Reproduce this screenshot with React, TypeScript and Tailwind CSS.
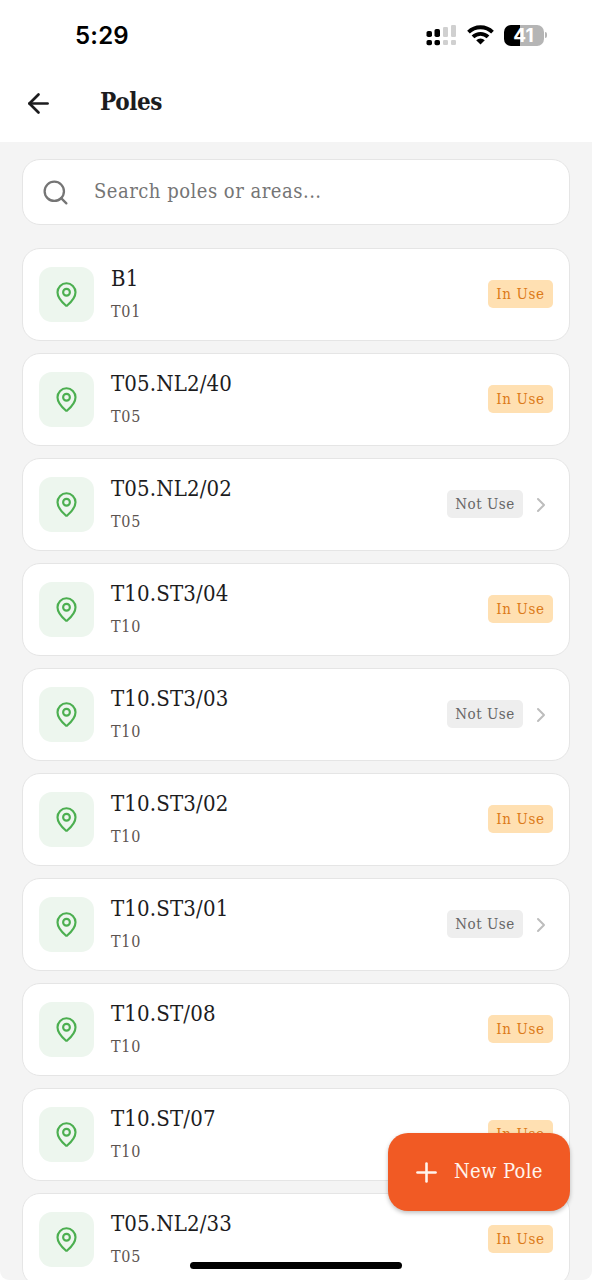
import { ArrowLeft, ChevronRight, MapPin, Plus, Search } from 'lucide-react'

type Pole = {
  name: string
  area: string
  inUse: boolean
}

const poles: Pole[] = [
  { name: 'B1', area: 'T01', inUse: true },
  { name: 'T05.NL2/40', area: 'T05', inUse: true },
  { name: 'T05.NL2/02', area: 'T05', inUse: false },
  { name: 'T10.ST3/04', area: 'T10', inUse: true },
  { name: 'T10.ST3/03', area: 'T10', inUse: false },
  { name: 'T10.ST3/02', area: 'T10', inUse: true },
  { name: 'T10.ST3/01', area: 'T10', inUse: false },
  { name: 'T10.ST/08', area: 'T10', inUse: true },
  { name: 'T10.ST/07', area: 'T10', inUse: true },
  { name: 'T05.NL2/33', area: 'T05', inUse: true },
]

function StatusBar() {
  return (
    <div className="flex h-[70px] items-center justify-between pl-[75px] pr-[45px] font-['Inter',sans-serif]">
      <span className="mt-[2px] text-[24px] font-semibold leading-none tracking-[0.2px] text-black">5:29</span>
      <div className="flex items-center">
        <svg width="32" height="22" viewBox="0 0 32 22">
          <g fill="#000">
            <rect x="0.5" y="7" width="5.5" height="6" rx="1.8" />
            <rect x="8.5" y="5" width="5.5" height="8" rx="1.8" />
            <rect x="0.5" y="16" width="5.5" height="5.3" rx="1.8" />
            <rect x="8.5" y="16" width="5.5" height="5.3" rx="1.8" />
          </g>
          <g fill="#d0d0d0">
            <rect x="17" y="3" width="5" height="10" rx="1.3" />
            <rect x="25" y="1" width="5" height="12" rx="1.3" />
            <rect x="17" y="16" width="5" height="5" rx="1.3" />
            <rect x="25" y="16" width="5" height="5" rx="1.3" />
          </g>
        </svg>
        <svg className="ml-[9px]" width="27" height="20" viewBox="0 0 27 20">
          <g fill="none" stroke="#000" strokeWidth="3.8">
            <path d="M1.5 7.2a17 17 0 0 1 24 0" />
            <path d="M6 11.9a10.6 10.6 0 0 1 15 0" />
          </g>
          <path d="M9.2 15.2a6.1 6.1 0 0 1 8.6 0L13.5 19.5z" fill="#000" />
        </svg>
        <div className="ml-[9.5px] flex h-[21px] w-[40px] items-center justify-center rounded-[7px] bg-linear-to-r from-black from-41% to-[#b5b5b5] to-41% text-[19px] font-bold leading-none text-white">
          41
        </div>
        <div className="ml-[1.5px] h-[6px] w-[2px] rounded-r-full bg-[#b5b5b5]" />
      </div>
    </div>
  )
}

function PoleCard({ pole }: { pole: Pole }) {
  return (
    <li className="flex h-[93px] shrink-0 items-center rounded-[18px] border border-[#e5e5e5] bg-white px-4">
      <div className="flex size-[55px] items-center justify-center rounded-[13px] bg-[#edf6ee]">
        <MapPin size={27} strokeWidth={1.9} color="#4caf50" />
      </div>
      <div className="-mt-px ml-[17px] flex-1">
        <p className="text-[22px] leading-[30px] tracking-[0.15px] text-[#1c1c1e]">{pole.name}</p>
        <p className="mt-[6px] text-[16px] leading-[24px] tracking-[0.7px] text-[#5d5450]">{pole.area}</p>
      </div>
      {pole.inUse ? (
        <span className="-mt-px flex h-[28px] w-[65px] items-center justify-center rounded-[5px] bg-[#ffe0b2] text-[15px] tracking-[0.65px] text-[#dc7a18]">
          In Use
        </span>
      ) : (
        <>
          <span className="-mt-px flex h-[28px] w-[76px] items-center justify-center rounded-[5px] bg-[#eeeeee] text-[15px] tracking-[0.5px] text-[#666666]">
            Not Use
          </span>
          <ChevronRight className="ml-[6px]" size={24} strokeWidth={2} color="#bdbdbd" />
        </>
      )}
    </li>
  )
}

export default function App() {
  return (
    <div className="relative flex h-[1280px] w-[592px] flex-col overflow-hidden rounded-b-[9px] bg-[#f4f4f4] font-['Roboto_Slab','DejaVu_Serif_Condensed','DejaVu_Serif',serif]">
      <header className="h-[142px] shrink-0 bg-white">
        <StatusBar />
        <div className="flex h-[67px] items-center pl-[23px]">
          <ArrowLeft size={31} strokeWidth={2.1} color="#1c1c1e" />
          <h1 className="ml-[46px] -mt-1 text-[24px] font-bold tracking-[-0.4px] text-[#1c1c1e]">Poles</h1>
        </div>
      </header>

      <main className="flex flex-col px-[22px] pt-[17px]">
        <div className="flex h-[66px] shrink-0 items-center rounded-[18px] border border-[#e5e5e5] bg-white pl-[18px]">
          <Search size={29} strokeWidth={1.9} color="#757575" />
          <span className="ml-[24px] -mt-[3px] text-[20px] tracking-[0.5px] text-[#757575]">Search poles or areas...</span>
        </div>
        <ul className="mt-[23px] flex flex-col gap-3">
          {poles.map((pole) => (
            <PoleCard key={pole.name} pole={pole} />
          ))}
        </ul>
      </main>

      <button
        type="button"
        className="absolute right-[22px] top-[1133px] flex h-[78px] w-[182px] items-center rounded-[20px] bg-[#f15a24] pl-[23px] text-[20px] tracking-[0.35px] text-[#fff4ec] shadow-[0_2px_4px_rgba(0,0,0,0.25)]"
      >
        <Plus size={31} strokeWidth={2} />
        <span className="ml-[12px] -mt-[3px] whitespace-nowrap">New Pole</span>
      </button>
      <div className="absolute left-[190px] top-[1262px] h-[7px] w-[212px] rounded-full bg-black" />
    </div>
  )
}
